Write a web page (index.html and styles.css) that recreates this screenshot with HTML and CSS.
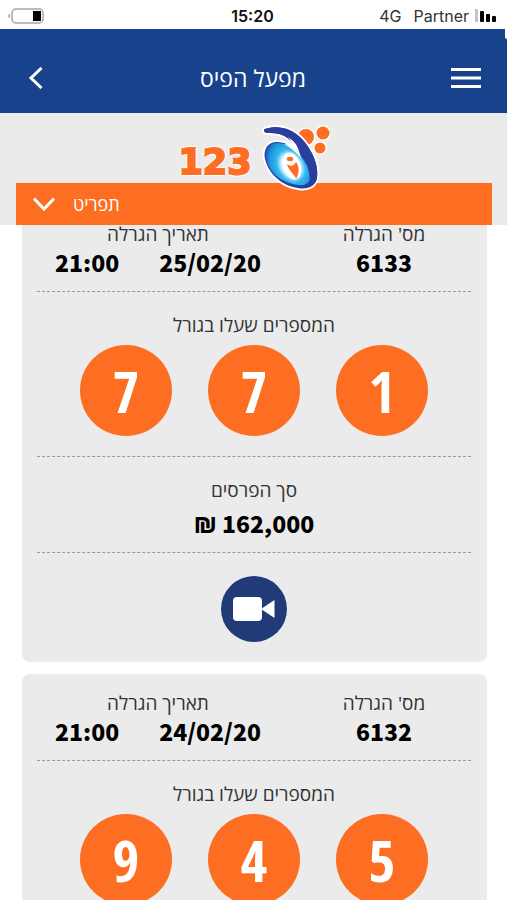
FILE: index.html
```html
<!DOCTYPE html>
<html lang="he" dir="rtl">
<head>
<meta charset="utf-8">
<meta name="viewport" content="width=device-width, initial-scale=1">
<title>מפעל הפיס</title>
<link rel="stylesheet" href="styles.css">
</head>
<body>
<div class="app">
  <div class="status">
    <div class="status-network">
      <svg class="signal" viewBox="0 0 22 14" aria-hidden="true">
        <path fill="#c4c4c4" d="M0 0h3v13H0z"/>
        <rect x="5" y="2" width="4" height="11" rx="1"/>
        <rect x="11" y="5" width="4" height="8" rx="1"/>
        <rect x="17" y="7" width="4" height="6" rx="1"/>
      </svg>
      <span>Partner</span>
      <span class="status-type">4G</span>
    </div>
    <time class="status-time">15:20</time>
    <div class="status-battery">
      <svg class="battery" viewBox="0 0 37 16" aria-hidden="true">
        <path fill="#aaa" d="M2 5.500v5C-.3 9.800-.3 6.200 2 5.500z"/>
        <rect x="4" y="1" width="31" height="14" rx="4" fill="#fff" stroke="#a5a5a5" stroke-width="1.500"/>
        <rect x="25" y="3" width="8" height="10"/>
      </svg>
    </div>
  </div>

  <header class="header">
    <button class="icon-button" type="button" aria-label="תפריט ראשי">
      <svg class="burger" viewBox="0 0 32 20" aria-hidden="true"><path d="M1 1.500h30M1 10h30M1 18.500h30"/></svg>
    </button>
    <h1 class="title">מפעל הפיס</h1>
    <button class="icon-button icon-button-end" type="button" aria-label="חזרה">
      <svg class="back" viewBox="0 0 14 22" aria-hidden="true"><path d="M12.500 1 2 11l10.500 10"/></svg>
    </button>
  </header>

  <div class="brand">
    <div class="logo">
      <svg class="logo-mark" viewBox="0 0 70 72" aria-hidden="true">
        <defs>
          <radialGradient id="disc" gradientUnits="userSpaceOnUse" cx="0" cy="0" r="1" gradientTransform="translate(31 45) rotate(-30) scale(24 32)">
            <stop offset=".35" stop-color="#e8fbff"/>
            <stop offset=".55" stop-color="#35b8ee"/>
            <stop offset=".8" stop-color="#1c98e0"/>
            <stop offset="1" stop-color="#2350ae"/>
          </radialGradient>
        </defs>
        <g fill="#fd6d22" stroke="#fff" stroke-width="3" paint-order="stroke">
          <circle cx="46" cy="16" r="8"/>
          <circle cx="63" cy="12" r="6.500"/>
          <circle cx="60" cy="27" r="5.500"/>
        </g>
        <path fill="#2a3e9e" stroke="#fff" stroke-width="4" stroke-linejoin="round" paint-order="stroke" d="M5 8C16 4 31 6 42 18c10 11 17 26 15 39-2 8-9 12-19 10C23 65 9 54 5 38 3 28 8 21 17 21c8 0 14 4 19 9C33 20 25 11 8 12 4 12 3 9 5 8z"/>
        <path fill="url(#disc)" d="M17 22c13 0 28 13 33 30 2 8-3 13-11 12C25 63 10 54 6 38 4 28 9 22 17 22z"/>
        <path fill="#fff" d="M24 12c9 4 14 12 17 25-5-6-10-10-17-14 4 0 8 2 10 5-2-7-5-12-10-16z"/>
        <path fill="#2a3e9e" d="M5 8C16 4 31 6 42 18c10 11 17 26 15 39-1 5-4 8-8 9 3-8-2-27-9-38C34 19 25 11 8 12 4 12 3 9 5 8z"/>
        <ellipse cx="32" cy="45" rx="8.500" ry="14" transform="rotate(-18 32 45)" fill="#fff"/>
        <ellipse cx="30" cy="38" rx="3.200" ry="2.200" fill="#fd6d22"/>
        <path fill="#fd6d22" d="M27 43c4 3 7 2 9-2 4 5 3 12 0 17-1-5-7-7-9-15z"/>
      </svg>
      <span class="logo-text">123</span>
    </div>
    <button class="menu-bar" type="button">
      <span>תפריט</span>
      <svg class="chevron" viewBox="0 0 22 14" aria-hidden="true"><path d="m1 1.500 10 10.500 10-10.500"/></svg>
    </button>
  </div>

  <main class="draws">
    <article class="card">
      <div class="section meta">
        <div class="cell">
          <div class="label">מס' הגרלה</div>
          <div class="value">6133</div>
        </div>
        <div class="cell">
          <div class="label">תאריך הגרלה</div>
          <div class="value when"><span>25/02/20</span><span>21:00</span></div>
        </div>
      </div>
      <div class="section numbers">
        <div class="label">המספרים שעלו בגורל</div>
        <div class="balls"><span class="ball">1</span><span class="ball">7</span><span class="ball">7</span></div>
      </div>
      <div class="section prize">
        <div class="label">סך הפרסים</div>
        <div class="value">162,000 ₪</div>
      </div>
      <div class="video">
        <button class="video-button" type="button" aria-label="צפייה בהגרלה">
          <svg class="camera" viewBox="0 0 42 24" aria-hidden="true"><rect width="29" height="24" rx="4"/><path d="M28 12 41.500 3v18z"/></svg>
        </button>
      </div>
    </article>

    <article class="card">
      <div class="section meta">
        <div class="cell">
          <div class="label">מס' הגרלה</div>
          <div class="value">6132</div>
        </div>
        <div class="cell">
          <div class="label">תאריך הגרלה</div>
          <div class="value when"><span>24/02/20</span><span>21:00</span></div>
        </div>
      </div>
      <div class="section numbers">
        <div class="label">המספרים שעלו בגורל</div>
        <div class="balls"><span class="ball">5</span><span class="ball">4</span><span class="ball">9</span></div>
      </div>
    </article>
  </main>
</div>
</body>
</html>
```
FILE: styles.css
```css
* {
  box-sizing: border-box;
}

body {
  margin: 0;
  background: #fff;
  color: #000;
  font-family: "Open Sans", "Noto Sans", sans-serif;
}

button {
  padding: 0;
  border: 0;
  background: none;
  color: inherit;
  font: inherit;
  cursor: pointer;
}

svg {
  display: block;
}

.app {
  display: flex;
  flex-direction: column;
  height: 100vh;
  overflow: hidden;
}

/* Phone status bar */
.status {
  display: grid;
  grid-template-columns: 1fr auto 1fr;
  align-items: center;
  flex: none;
  height: 29px;
  padding: 3px 10px 0 8px;
  font: 16px/24px Inter, sans-serif;
  color: #333;
}

.status-network {
  display: flex;
  align-items: center;
  gap: 6px;
}

.status-type {
  margin-right: 6px;
}

.status-time {
  color: #111;
  font-weight: 600;
}

.status-battery {
  display: flex;
  justify-content: flex-end;
}

.signal {
  width: 22px;
  height: 14px;
}

.battery {
  width: 37px;
  height: 16px;
}

/* Title bar */
.header {
  position: relative;
  display: grid;
  grid-template-columns: 1fr auto 1fr;
  align-items: center;
  flex: none;
  height: 84px;
  padding: 14px 25px 0 24px;
  background: #18428b;
  color: #fff;
}

.header::after {
  content: "";
  position: absolute;
  top: 0;
  right: 0;
  width: 2px;
  height: 10px;
  background: #fff;
  border-bottom-left-radius: 2px;
}

.title {
  margin: 0;
  font-size: 23px;
  line-height: 32px;
  font-weight: 400;
}

.icon-button {
  display: flex;
  align-items: center;
  justify-self: start;
  height: 32px;
}

.icon-button-end {
  justify-self: end;
}

.burger,
.back,
.chevron {
  fill: none;
  stroke: #fff;
  stroke-width: 3;
}

.burger {
  width: 32px;
  height: 20px;
}

.back {
  width: 24px;
  height: 22px;
}

/* Game logo and menu */
.brand {
  position: relative;
  z-index: 1;
  flex: none;
  padding: 8px 15px 0 16px;
  background: #ebebeb;
}

.logo {
  position: relative;
  z-index: 1;
  display: flex;
  align-items: flex-start;
  justify-content: center;
  gap: 8px;
  height: 62px;
}

.logo-mark {
  flex: none;
  width: 70px;
  height: 72px;
}

.logo-text {
  padding-top: 21px;
  color: #fd6d22;
  font: 700 35px/40px "DejaVu Sans", sans-serif;
  -webkit-text-stroke: 2px #fd6d22;
  text-shadow: 2px 0 #fff, -2px 0 #fff, 0 2px #fff, 0 -2px #fff;
}

.menu-bar {
  display: flex;
  align-items: center;
  justify-content: flex-end;
  gap: 18px;
  width: 100%;
  height: 42px;
  padding: 0 17px;
  background: #fd6d22;
  color: #fff;
  font-size: 18px;
}

.chevron {
  width: 22px;
  height: 14px;
}

/* Draw results */
.draws {
  display: flex;
  flex-direction: column;
  gap: 12px;
  flex: 1;
  min-height: 0;
  margin-top: -20px;
  padding: 0 20px 0 22px;
  overflow-y: auto;
  scrollbar-width: none;
}

.card {
  flex: none;
  padding: 15px 16px 20px 15px;
  border-radius: 8px;
  background: #ebebeb;
  text-align: center;
}

.section {
  border-bottom: 1px dashed #999;
}

.meta {
  display: grid;
  grid-template-columns: 174fr 242fr;
  gap: 18px;
  padding-bottom: 14px;
}

.label {
  color: #333;
  font-size: 19px;
  line-height: 28px;
}

.value {
  font: 900 23px/29px "Noto Sans CJK JP", "Noto Sans", sans-serif;
}

.when {
  display: flex;
  justify-content: center;
  gap: 40px;
}

.numbers {
  padding: 19px 0 20px;
}

.balls {
  display: flex;
  justify-content: center;
  gap: 36px;
  margin-top: 6px;
}

.ball {
  display: flex;
  align-items: center;
  justify-content: center;
  width: 92px;
  height: 91px;
  border-radius: 50%;
  background: #fd6d22;
  color: #fff;
  font: 700 58px/64px "Noto Sans ExtraCondensed", "Open Sans Condensed", "Roboto Condensed", "Liberation Sans Narrow", sans-serif;
}

.prize {
  padding: 19px 0 14px;
}

.prize .value {
  margin-top: 5px;
}

.video {
  display: flex;
  justify-content: center;
  padding-top: 23px;
}

.video-button {
  display: flex;
  align-items: center;
  justify-content: center;
  width: 66px;
  height: 66px;
  border-radius: 50%;
  background: #213b78;
}

.camera {
  width: 42px;
  height: 24px;
  fill: #fff;
}
```
